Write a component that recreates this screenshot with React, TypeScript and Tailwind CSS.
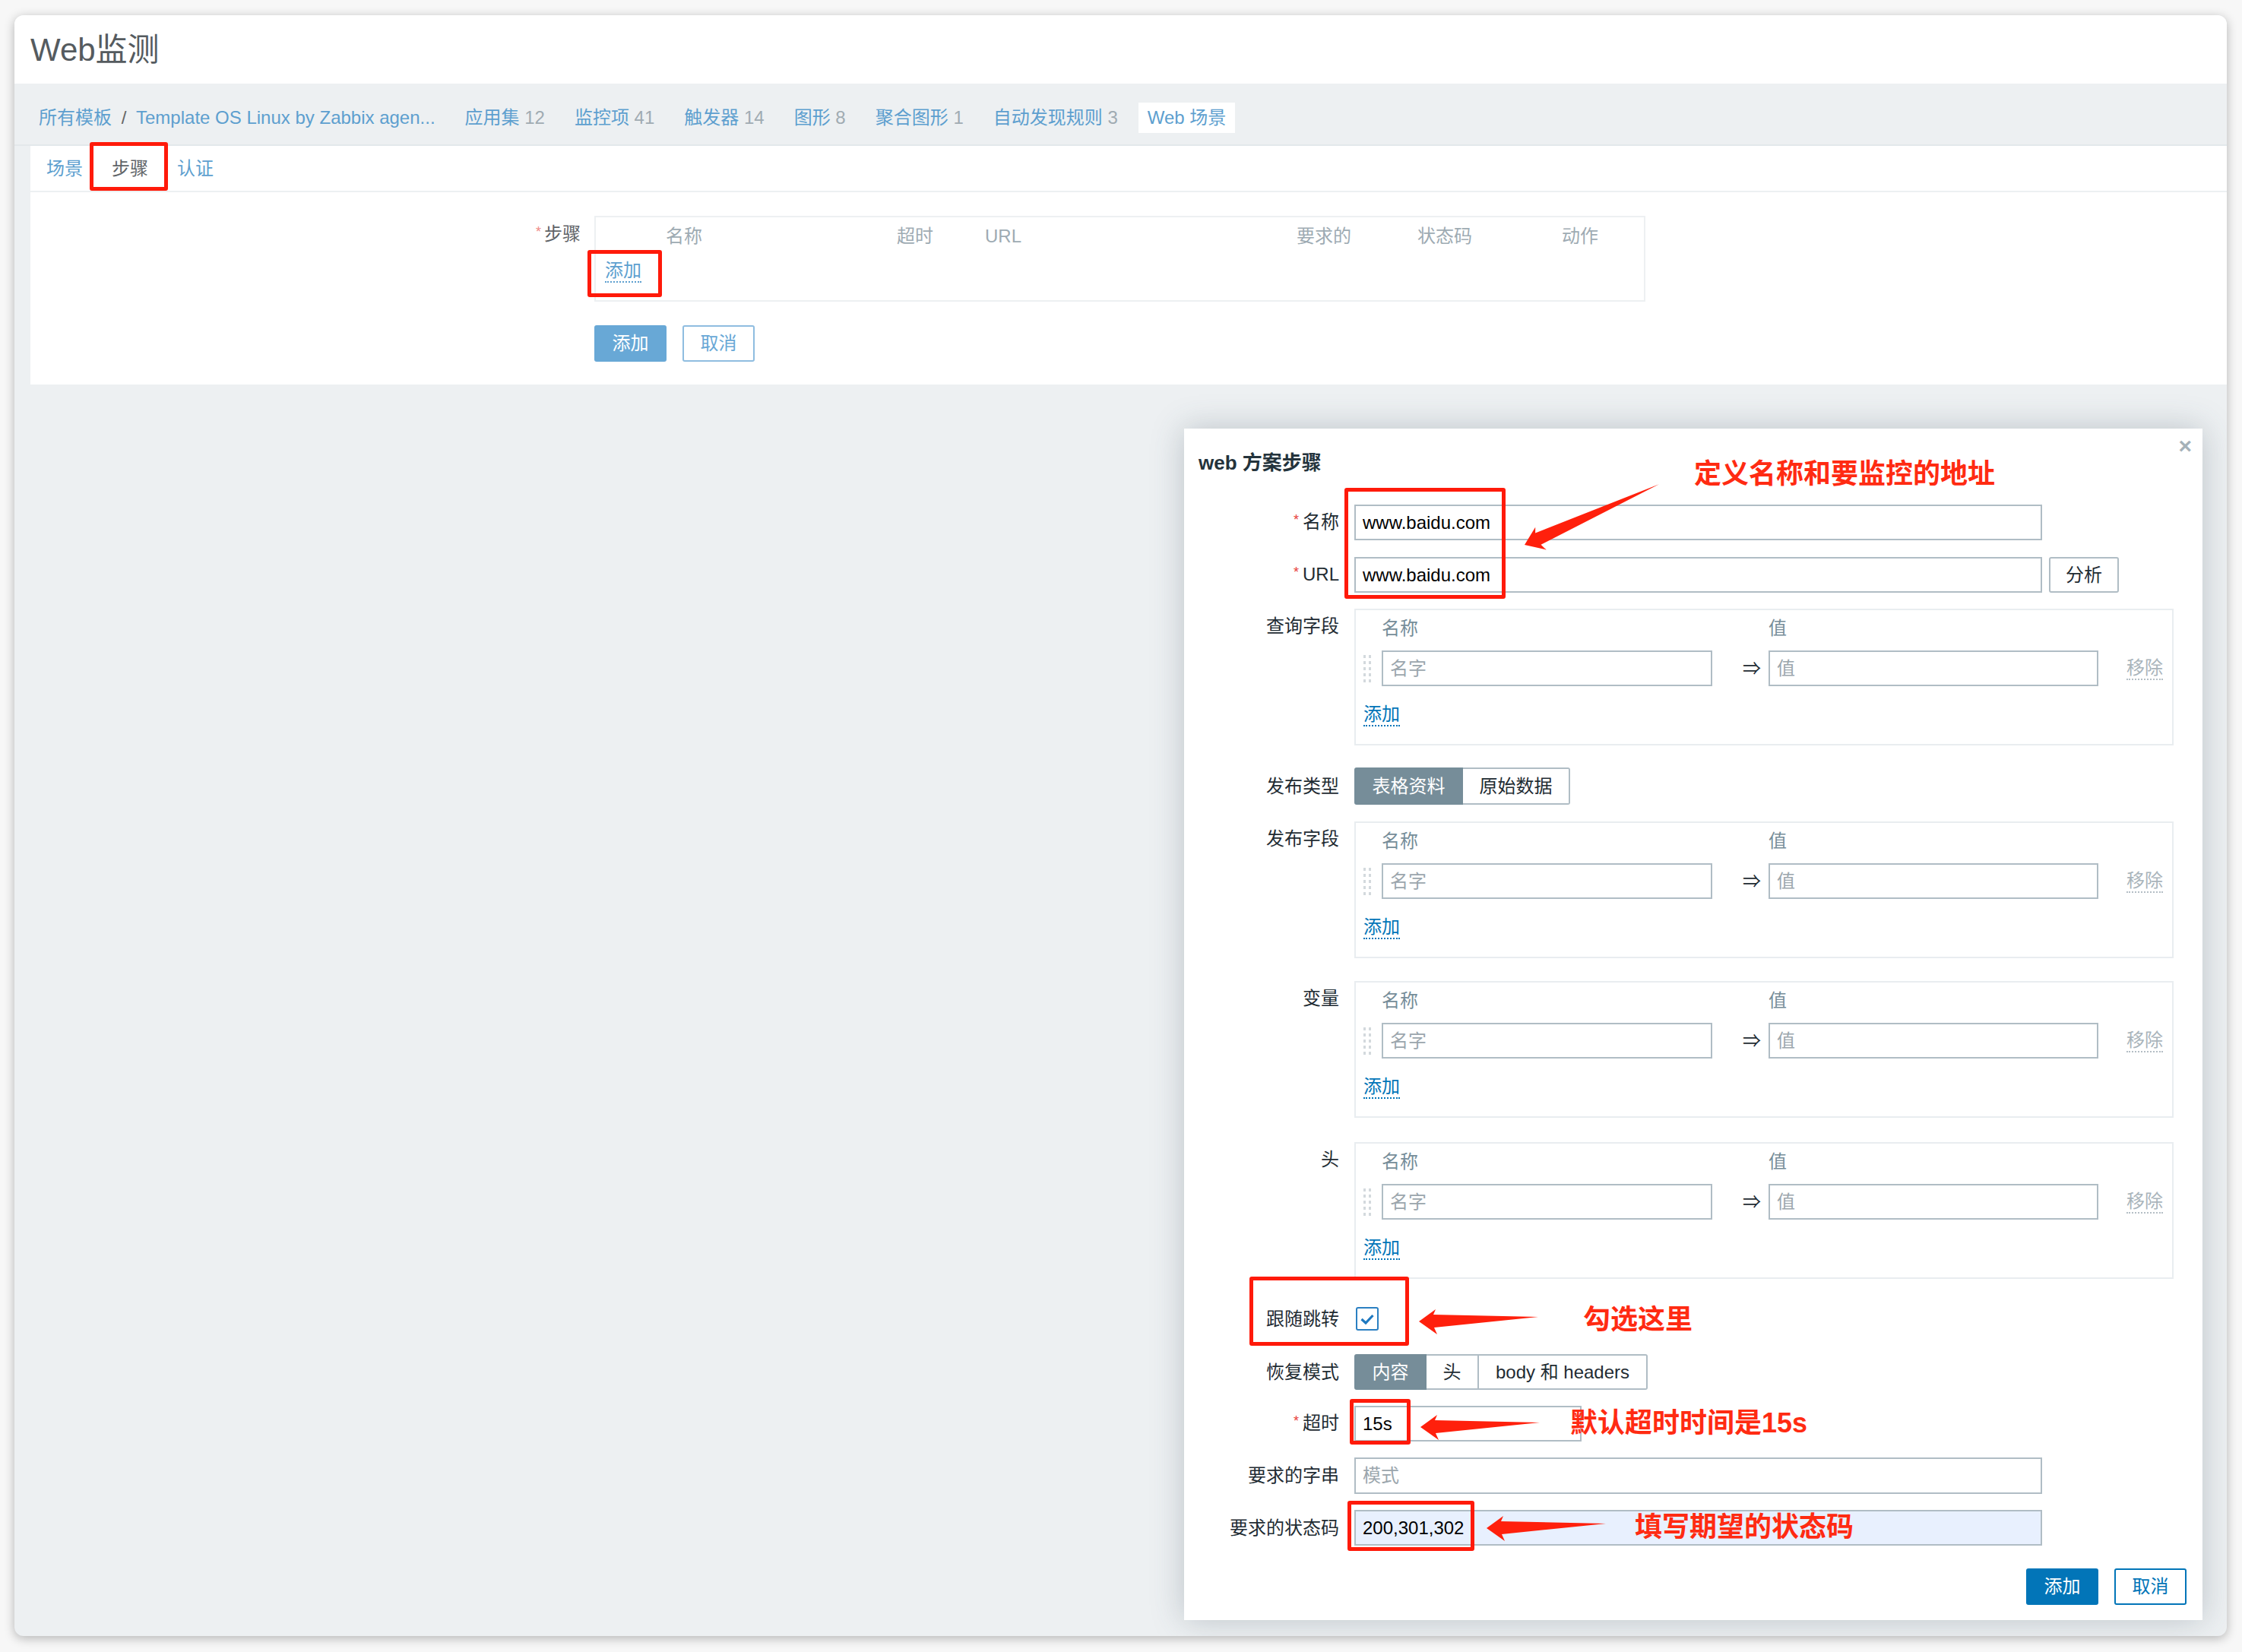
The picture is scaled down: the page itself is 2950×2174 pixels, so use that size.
import React from "react";

const navItems = [
  { label: "应用集", count: "12" },
  { label: "监控项", count: "41" },
  { label: "触发器", count: "14" },
  { label: "图形", count: "8" },
  { label: "聚合图形", count: "1" },
  { label: "自动发现规则", count: "3" },
];

const inputCls =
  "h-[47px] border-2 border-[#b0bdc5] bg-white px-[9px] flex items-center text-[24px]";

const Label = ({ text, req }: { text: string; req?: boolean }) => (
  <div className="w-[204px] shrink-0 text-right text-[24px] leading-[30px] text-[#1f2c33]">
    {req && <span className="relative -top-[5px] mr-[5px] text-[18px] text-[#e8403a]">*</span>}
    {text}
  </div>
);

const DragHandle = () => (
  <div className="w-[24px] shrink-0">
    <div className="grid w-[10px] grid-cols-2 gap-x-[4px] gap-y-[4px]">
      {Array.from({ length: 10 }).map((_, i) => (
        <span key={i} className="block h-[4px] w-[3px] bg-[#d3d9dd]" />
      ))}
    </div>
  </div>
);

const AddLink = () => (
  <span className="border-b-2 border-dotted border-[#0275b8] text-[24px] leading-[28px] text-[#0275b8]">
    添加
  </span>
);

// 名称 / 值 editable list box used by several rows in the dialog
const KVBox = () => (
  <div className="h-[180px] w-[1078px] border-2 border-[#e9edf0] pl-[10px] pt-[10px]">
    <div className="flex h-[28px] items-center text-[24px] text-[#768d99]">
      <span className="w-[24px]" />
      <span className="w-[509px]">名称</span>
      <span>值</span>
    </div>
    <div className="mt-[15px] flex h-[47px] items-center">
      <DragHandle />
      <div className={`${inputCls} w-[435px] text-[#9ba6ad]`}>名字</div>
      <div className="w-[74px] pl-[40px] text-[24px] text-[#1f2c33]">⇒</div>
      <div className={`${inputCls} w-[434px] text-[#9ba6ad]`}>值</div>
      <span className="ml-[37px] border-b-2 border-dotted border-[#b4bec5] text-[24px] leading-[28px] text-[#a9b4bb]">
        移除
      </span>
    </div>
    <div className="mt-[23px] flex">
      <AddLink />
    </div>
  </div>
);

const Arrow = ({ x, y, len, rot = 0 }: { x: number; y: number; len: number; rot?: number }) => (
  <polygon
    points={`0,0 22,-16 19,-9 ${len},-6 20,8 24,17`}
    transform={`translate(${x} ${y}) rotate(${rot})`}
    fill="#ff200c"
  />
);

const Dialog = () => (
  <div className="absolute left-[1539px] top-[544px] h-[1568px] w-[1340px] bg-white pt-[28px] shadow-[0_0_40px_rgba(60,80,95,0.28)]">
    <div className="flex h-[34px] items-center pl-[19px] text-[26px] font-bold text-[#24333c]">
      web 方案步骤
    </div>
    <span className="absolute right-[14px] top-[8px] text-[30px] font-bold leading-[30px] text-[#a5b1b8]">
      ×
    </span>

    <div className="mt-[38px] flex flex-col text-[24px]">
      <div className="flex items-center gap-[20px]">
        <Label text="名称" req />
        <div className={`${inputCls} w-[905px] text-black`}>www.baidu.com</div>
      </div>
      <div className="mt-[22px] flex items-center gap-[20px]">
        <Label text="URL" req />
        <div className={`${inputCls} w-[905px] text-black`}>www.baidu.com</div>
        <div className="-ml-[11px] flex h-[47px] w-[92px] items-center justify-center rounded-[3px] border-2 border-[#b0bdc5] text-[#1f2c33]">
          分析
        </div>
      </div>
      <div className="mt-[21px] flex gap-[20px]">
        <div className="pt-[8px]">
          <Label text="查询字段" />
        </div>
        <KVBox />
      </div>
      <div className="mt-[29px] flex items-center gap-[20px]">
        <Label text="发布类型" />
        <div className="flex h-[49px]">
          <div className="flex w-[143px] items-center justify-center rounded-l-[3px] bg-[#768d99] text-white">
            表格资料
          </div>
          <div className="flex w-[141px] items-center justify-center rounded-r-[3px] border-2 border-l-0 border-[#b0bdc5] text-[#1f2c33]">
            原始数据
          </div>
        </div>
      </div>
      <div className="mt-[22px] flex gap-[20px]">
        <div className="pt-[8px]">
          <Label text="发布字段" />
        </div>
        <KVBox />
      </div>
      <div className="mt-[30px] flex gap-[20px]">
        <div className="pt-[8px]">
          <Label text="变量" />
        </div>
        <KVBox />
      </div>
      <div className="mt-[32px] flex gap-[20px]">
        <div className="pt-[8px]">
          <Label text="头" />
        </div>
        <KVBox />
      </div>
      <div className="mt-[29px] flex h-[47px] items-center gap-[20px]">
        <Label text="跟随跳转" />
        <div className="ml-[2px] flex h-[31px] w-[30px] items-center justify-center rounded-[3px] border-2 border-[#2b80c2]">
          <svg width="20" height="16" viewBox="0 0 20 16">
            <path d="M2.5 8 L8 13 L17.5 3" fill="none" stroke="#1f79c0" strokeWidth="3.2" />
          </svg>
        </div>
      </div>
      <div className="mt-[23px] flex items-center gap-[20px]">
        <Label text="恢复模式" />
        <div className="flex h-[47px]">
          <div className="flex w-[95px] items-center justify-center rounded-l-[3px] bg-[#768d99] text-white">
            内容
          </div>
          <div className="flex w-[69px] items-center justify-center border-2 border-l-0 border-[#b0bdc5] text-[#1f2c33]">
            头
          </div>
          <div className="flex w-[222px] items-center justify-center rounded-r-[3px] border-2 border-l-0 border-[#b0bdc5] text-[#1f2c33]">
            body 和 headers
          </div>
        </div>
      </div>
      <div className="mt-[21px] flex items-center gap-[20px]">
        <Label text="超时" req />
        <div className={`${inputCls} w-[299px] text-black`}>15s</div>
      </div>
      <div className="mt-[21px] flex items-center gap-[20px]">
        <Label text="要求的字串" />
        <div className={`${inputCls} h-[48px] w-[905px] text-[#9ba6ad]`}>模式</div>
      </div>
      <div className="mt-[21px] flex items-center gap-[20px]">
        <Label text="要求的状态码" />
        <div className="flex h-[47px] w-[905px] items-center border-2 border-[#b0bdc5] bg-[#e8f0fe] px-[9px] text-black">
          200,301,302
        </div>
      </div>
      <div className="mt-[30px] flex justify-end gap-[21px] pr-[21px]">
        <div className="flex h-[48px] w-[95px] items-center justify-center rounded-[3px] bg-[#0275b8] text-white">
          添加
        </div>
        <div className="flex h-[48px] w-[95px] items-center justify-center rounded-[3px] border-2 border-[#0275b8] text-[#0275b8]">
          取消
        </div>
      </div>
    </div>

    {/* annotations drawn over the dialog */}
    <div className="pointer-events-none absolute left-[211px] top-[78px] h-[146px] w-[212px] rounded-[3px] border-[5px] border-[#ff1a0a]" />
    <div className="pointer-events-none absolute left-[86px] top-[1116px] h-[91px] w-[210px] rounded-[3px] border-[5px] border-[#ff1a0a]" />
    <div className="pointer-events-none absolute left-[218px] top-[1277px] h-[60px] w-[80px] rounded-[3px] border-[5px] border-[#ff1a0a]" />
    <div className="pointer-events-none absolute left-[215px] top-[1411px] h-[66px] w-[167px] rounded-[3px] border-[5px] border-[#ff1a0a]" />
    <svg className="pointer-events-none absolute left-0 top-0" width="1340" height="1568">
      <Arrow x={448} y={153} len={194} rot={-22.5} />
      <Arrow x={309} y={1175} len={157} />
      <Arrow x={311} y={1314} len={157} />
      <Arrow x={398} y={1447} len={157} />
    </svg>
    <div className="absolute left-[671px] top-[42px] text-[36px] font-bold leading-none text-[#ff2b12]">
      定义名称和要监控的地址
    </div>
    <div className="absolute left-[525px] top-[1155px] text-[36px] font-bold leading-none text-[#ff2b12]">
      勾选这里
    </div>
    <div className="absolute left-[508px] top-[1291px] text-[36px] font-bold leading-none text-[#ff2b12]">
      默认超时时间是15s
    </div>
    <div className="absolute left-[593px] top-[1428px] text-[36px] font-bold leading-none text-[#ff2b12]">
      填写期望的状态码
    </div>
  </div>
);

export default function App() {
  return (
    <div className="h-[2174px] w-[2950px] bg-[#f7f7f7] pl-[19px] pt-[20px] font-['Liberation_Sans','Noto_Sans_CJK_SC',sans-serif]">
      <div className="relative h-[2133px] w-[2911px] overflow-hidden rounded-[12px] bg-[#edf0f2] shadow-[0_3px_14px_rgba(0,0,0,0.28)]">
        {/* page header */}
        <div className="flex h-[90px] items-center bg-white pl-[21px]">
          <h1 className="text-[42px] text-[#555b5f]">Web监测</h1>
        </div>

        {/* template navigation */}
        <div className="flex h-[82px] items-center gap-[15px] border-b-2 border-[#e3e8eb] pl-[20px] pt-[10px] text-[24px]">
          <div className="px-[12px] text-[#5d9fcf]">
            所有模板 <span className="mx-[6px] text-[#666]">/</span> Template OS Linux by Zabbix agen...
          </div>
          {navItems.map((n) => (
            <div key={n.label} className="px-[12px] text-[#5d9fcf]">
              {n.label} <span className="text-[#a0abb2]">{n.count}</span>
            </div>
          ))}
          <div className="flex h-[40px] items-center bg-white px-[12px] text-[#5d9fcf]">Web 场景</div>
        </div>

        {/* main white panel */}
        <div className="ml-[21px] h-[314px] bg-white">
          <div className="flex h-[61px] border-b-2 border-[#edf0f2] pl-[2px] text-[24px]">
            <div className="flex h-full items-center px-[19px] text-[#5d9fcf]">场景</div>
            <div className="relative flex h-full items-center px-[19px] text-[#5f6468]">
              步骤
              <div className="absolute -left-[10px] -right-[7px] -top-[5px] bottom-0 rounded-[3px] border-[5px] border-[#ff1a0a]" />
            </div>
            <div className="flex h-full items-center px-[19px] text-[#5d9fcf]">认证</div>
          </div>

          <div className="flex pt-[31px] text-[24px]">
            <div className="w-[724px] pt-[9px] text-right leading-[30px] text-[#5f6468]">
              <span className="relative -top-[5px] mr-[4px] text-[18px] text-[#ef8a86]">*</span>步骤
            </div>
            <div className="ml-[18px]">
              <div className="relative h-[113px] w-[1383px] border-2 border-[#edf0f2] pl-[10px] pt-[10px]">
                <div className="flex h-[30px] items-center pl-[82px] text-[#9eabb3]">
                  <span className="w-[304px]">名称</span>
                  <span className="w-[116px]">超时</span>
                  <span className="w-[410px]">URL</span>
                  <span className="w-[159px]">要求的</span>
                  <span className="w-[190px]">状态码</span>
                  <span>动作</span>
                </div>
                <div className="mt-[16px] flex pl-[2px]">
                  <span className="border-b-2 border-dotted border-[#5d9fcf] leading-[28px] text-[#5d9fcf]">添加</span>
                </div>
                <div className="absolute -left-[11px] top-[43px] h-[62px] w-[98px] rounded-[3px] border-[5px] border-[#ff1a0a]" />
              </div>
              <div className="mt-[31px] flex gap-[21px]">
                <div className="flex h-[48px] w-[95px] items-center justify-center rounded-[3px] bg-[#68a8d6] text-white">
                  添加
                </div>
                <div className="flex h-[48px] w-[95px] items-center justify-center rounded-[3px] border-2 border-[#8fbde0] text-[#68a8d6]">
                  取消
                </div>
              </div>
            </div>
          </div>
        </div>

        <Dialog />
      </div>
    </div>
  );
}
